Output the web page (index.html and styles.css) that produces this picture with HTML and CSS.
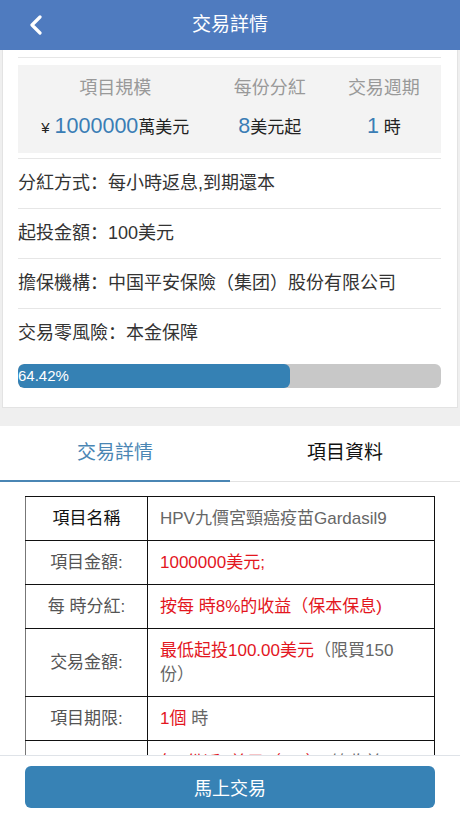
FILE: index.html
```html
<!DOCTYPE html>
<html lang="zh-CN">
<head>
    <meta charset="UTF-8">
    <meta name="viewport" content="width=device-width, initial-scale=1.0">
    <title>交易詳情</title>
    <link rel="stylesheet" href="styles.css">
</head>
<body>
    <header class="topbar">
        <a class="back" href="#">
            <svg width="14" height="20" viewBox="0 0 14 20"><path d="M11 2 L3 10 L11 18" fill="none" stroke="#fff" stroke-width="3.2" stroke-linecap="round" stroke-linejoin="round"/></svg>
        </a>
        <h1>交易詳情</h1>
    </header>

    <section class="card">
        <div class="stats">
            <div class="stat">
                <p class="stat-label">項目規模</p>
                <p class="stat-value"><span class="yen">¥</span><span class="num">1000000</span>萬美元</p>
            </div>
            <div class="stat">
                <p class="stat-label">每份分紅</p>
                <p class="stat-value"><span class="num">8</span>美元起</p>
            </div>
            <div class="stat">
                <p class="stat-label">交易週期</p>
                <p class="stat-value"><span class="num">1</span> 時</p>
            </div>
        </div>
        <ul class="info">
            <li>分紅方式：每小時返息,到期還本</li>
            <li>起投金額：100美元</li>
            <li>擔保機構：中国平安保險（集团）股份有限公司</li>
            <li>交易零風險：本金保障</li>
        </ul>
        <div class="progress">
            <div class="progress-bar" style="width: 64.42%">64.42%</div>
        </div>
    </section>

    <section class="detail">
        <nav class="tabs">
            <a href="#" class="tab active">交易詳情</a>
            <a href="#" class="tab">項目資料</a>
        </nav>
        <table class="spec">
            <tr>
                <th>項目名稱</th>
                <td>HPV九價宮頸癌疫苗Gardasil9</td>
            </tr>
            <tr>
                <td class="key">項目金額:</td>
                <td><span class="red">1000000美元;</span></td>
            </tr>
            <tr>
                <td class="key">每 時分紅:</td>
                <td><span class="red">按每 時8%的收益（保本保息)</span></td>
            </tr>
            <tr>
                <td class="key">交易金額:</td>
                <td><span class="red">最低起投100.00美元</span>（限買150<br>份）</td>
            </tr>
            <tr>
                <td class="key">項目期限:</td>
                <td><span class="red">1個</span> 時</td>
            </tr>
            <tr>
                <td class="key">收益計算:</td>
                <td><span class="red">每1份返8美元（8%）</span>，總收益108美元</td>
            </tr>
            <tr>
                <td class="key">還款方式:</td>
                <td>到期還本還息</td>
            </tr>
        </table>
    </section>

    <footer class="footbar">
        <button class="buy">馬上交易</button>
    </footer>
</body>
</html>
```

FILE: styles.css
```css
* {
    box-sizing: border-box;
}
body {
    margin: 0;
    padding-bottom: 70px;
    font-family: "Liberation Sans", "Noto Sans CJK SC", sans-serif;
    background-color: #efefef;
    color: #333;
}
p, ul, h1 {
    margin: 0;
    padding: 0;
}
a {
    text-decoration: none;
}

.topbar {
    height: 50px;
    background-color: #4f7bbf;
    display: flex;
    align-items: center;
    justify-content: center;
    position: relative;
}
.topbar h1 {
    color: #fff;
    font-size: 19px;
    font-weight: normal;
    line-height: 50px;
}
.back {
    position: absolute;
    left: 29px;
    top: 15px;
    display: flex;
}

.card {
    margin: 0 2px;
    padding: 7px 16px 19px 15px;
    background-color: #fff;
    border: 1px solid #e3e3e3;
    border-top: none;
}
.stats {
    display: grid;
    grid-template-columns: 46% 27% 27%;
    padding-top: 7px;
    border-top: 1px solid #e6e6e6;
}
.stat {
    background-color: #f3f3f3;
    text-align: center;
    padding: 11px 0 12px;
}
.stat-label {
    font-size: 18px;
    line-height: 24px;
    color: #999;
}
.stat-value {
    margin-top: 13px;
    font-size: 17px;
    line-height: 26px;
    color: #222;
}
.yen {
    font-size: 15px;
    margin-right: 5px;
}
.num {
    font-size: 21.5px;
    color: #3a7db5;
}

.info {
    list-style: none;
    margin-top: 5px;
}
.info li {
    height: 50px;
    line-height: 48px;
    font-size: 18px;
    color: #333;
    border-top: 1px solid #e6e6e6;
}
.progress {
    margin-top: 6px;
    height: 24px;
    background-color: #c8c8c8;
    border-radius: 6px;
    overflow: hidden;
}
.progress-bar {
    height: 100%;
    background-color: #3581b4;
    border-radius: 6px;
    color: #fff;
    font-size: 15px;
    line-height: 24px;
}

.detail {
    margin-top: 18px;
    background-color: #fff;
    padding-bottom: 20px;
}
.tabs {
    display: flex;
    border-bottom: 1px solid #e2e2e2;
}
.tab {
    flex: 1;
    text-align: center;
    height: 56px;
    line-height: 54px;
    font-size: 19px;
    color: #111;
    border-bottom: 2px solid transparent;
    margin-bottom: -1px;
}
.tab.active {
    color: #4a86b4;
    border-bottom-color: #4a86b4;
}

.spec {
    margin: 14px 25px 0;
    width: 410px;
    border-collapse: collapse;
    font-size: 17px;
}
.spec th,
.spec td {
    border: 1px solid #111;
    padding: 10px 12px 9px;
    line-height: 24px;
    text-align: left;
    color: #666;
}
.spec th,
.spec td.key {
    width: 122px;
    text-align: center;
    color: #555;
    border-left-color: #777;
}
.spec th {
    color: #111;
    font-weight: normal;
}
.red {
    color: #e3161e;
}

.footbar {
    position: fixed;
    left: 0;
    right: 0;
    bottom: 0;
    height: 63px;
    padding: 10px 25px 0;
    background-color: #fff;
    border-top: 1px solid #dfe3e8;
}
.buy {
    width: 100%;
    height: 42px;
    border: none;
    border-radius: 6px;
    background-color: #3782b5;
    color: #fff;
    font-family: inherit;
    font-size: 18px;
}
```
